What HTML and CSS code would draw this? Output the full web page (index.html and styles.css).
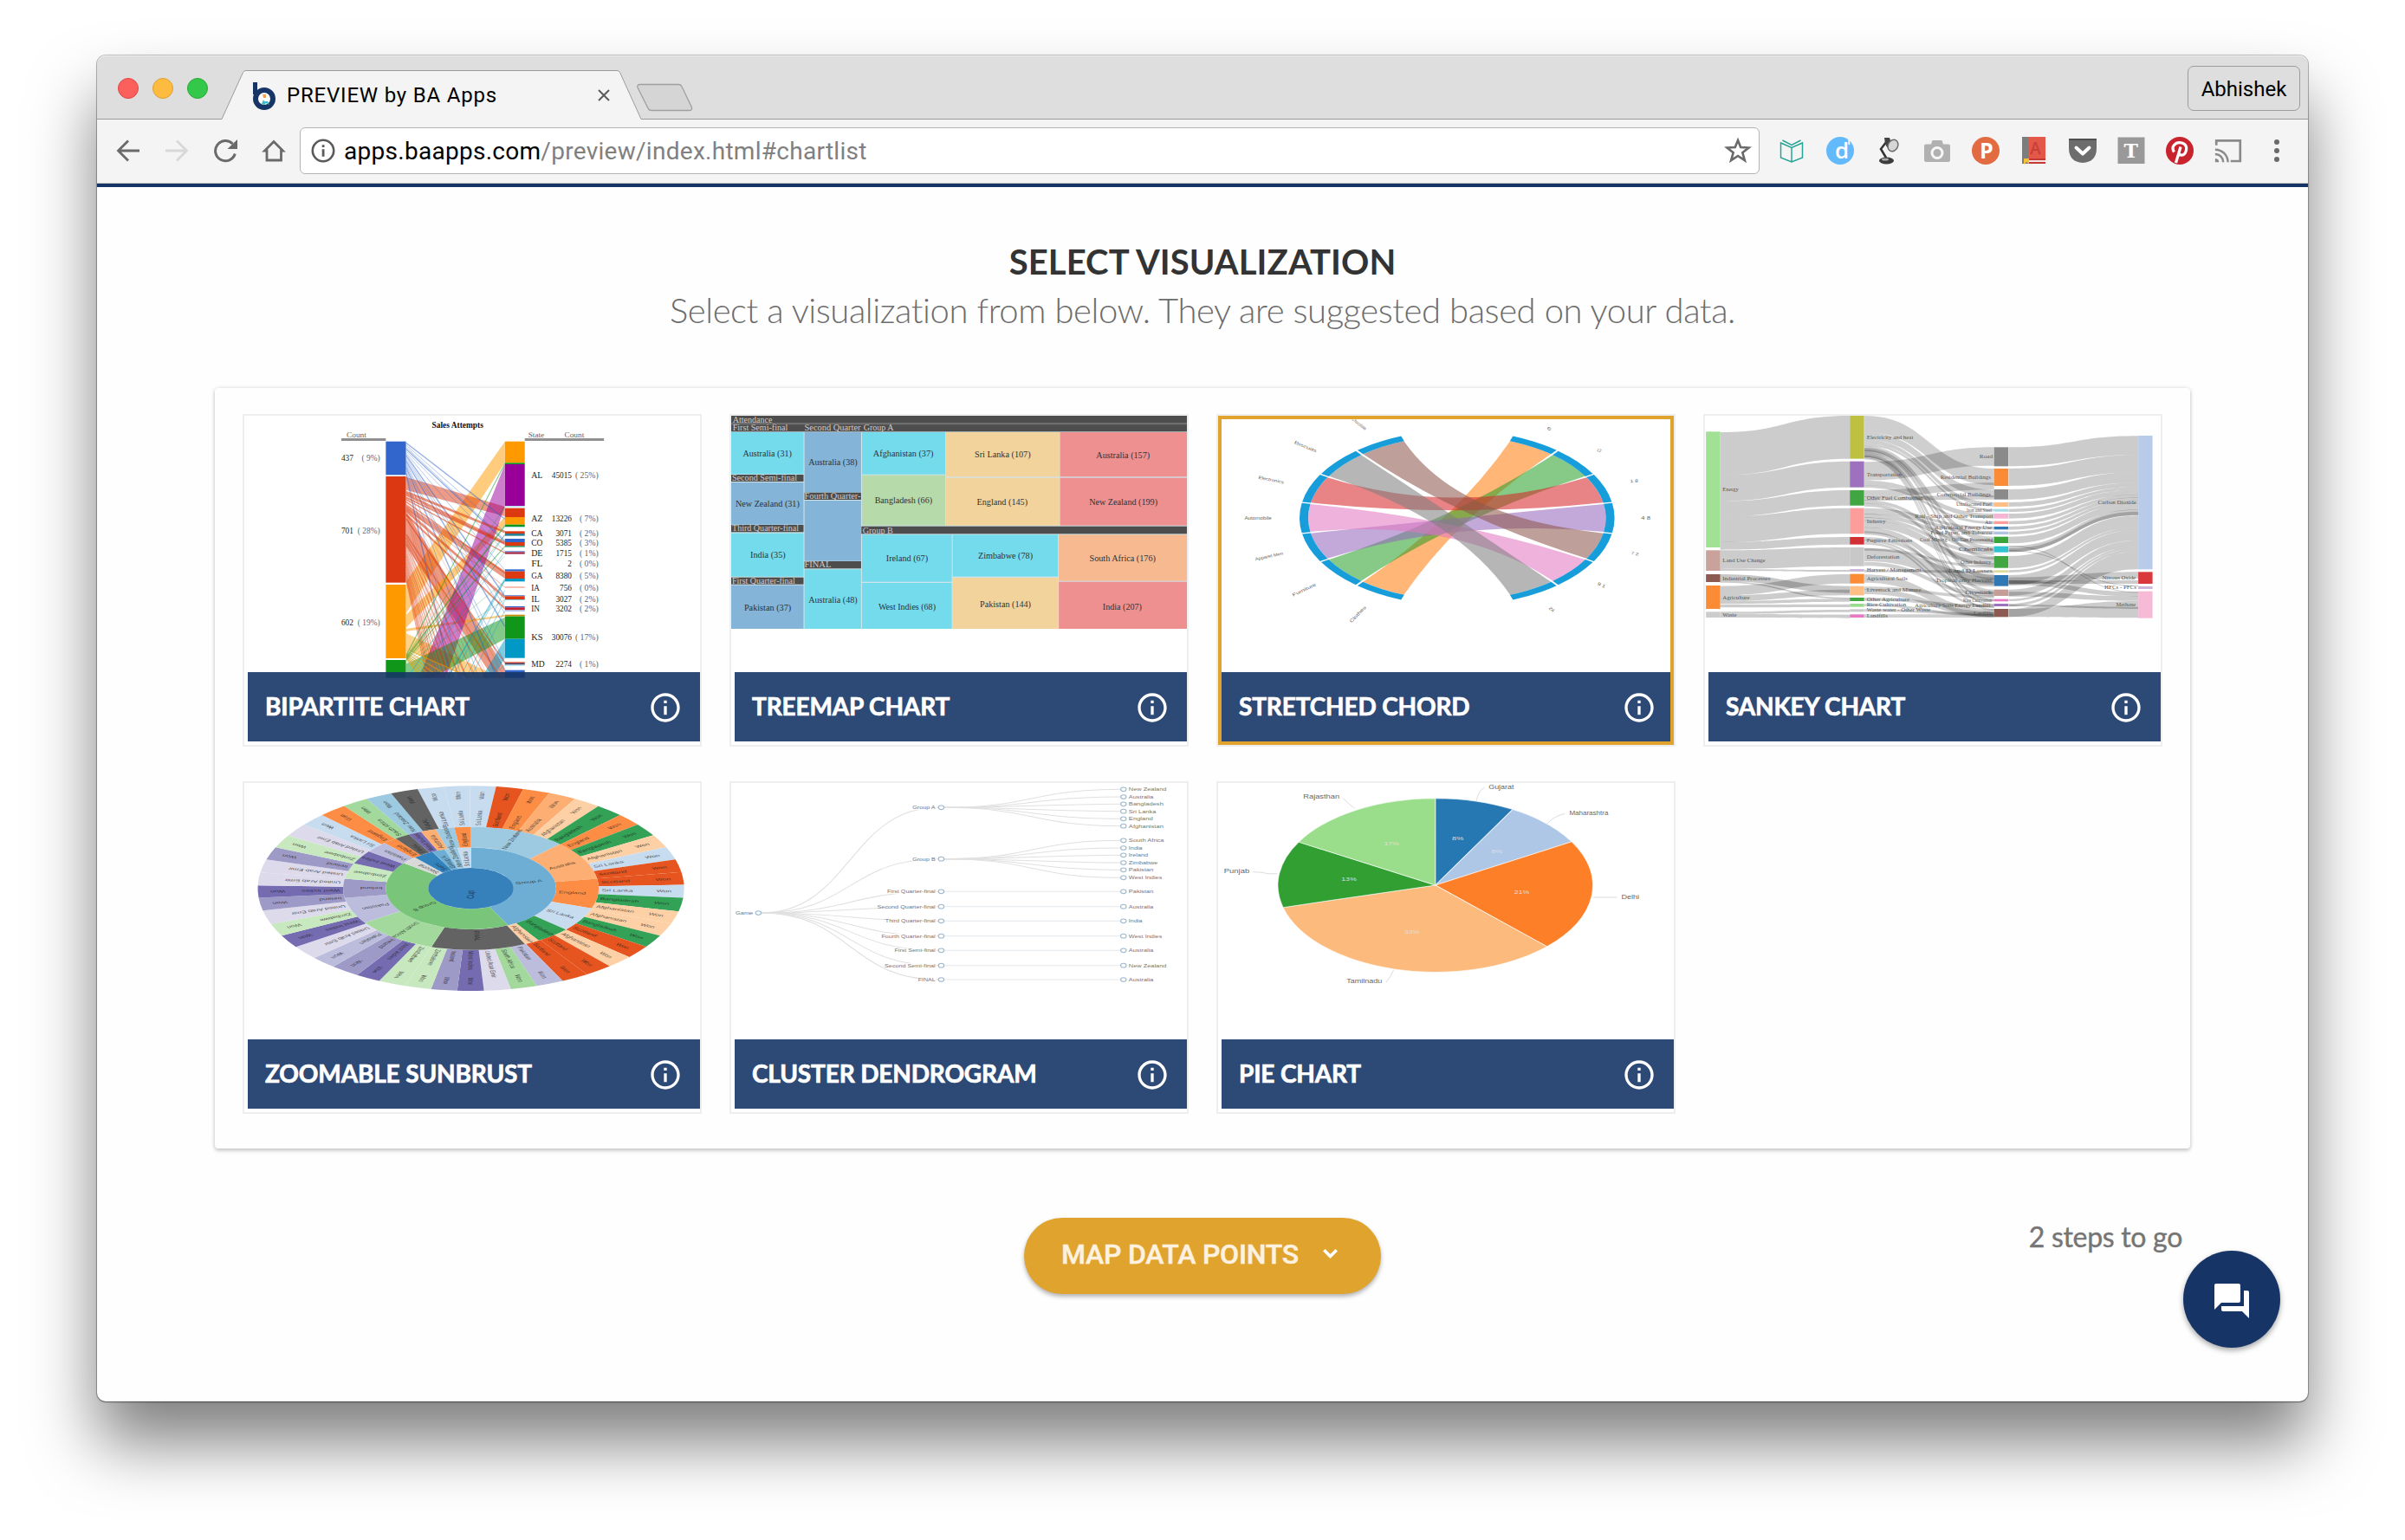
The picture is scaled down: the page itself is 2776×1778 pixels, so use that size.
FILE: index.html
```html
<!DOCTYPE html>
<html lang="en">
<head>
<meta charset="utf-8">
<title>PREVIEW by BA Apps</title>
<link rel="stylesheet" href="styles.css">
</head>
<body>
<div class="window">
  <header class="tabstrip">
    <div class="lights"><i class="light red"></i><i class="light amber"></i><i class="light green"></i></div>
    <div class="tab">
      <svg class="tab-shape" width="492" height="74" viewBox="0 0 492 74"><path d="M0 75 V73.5 H4 L28.500 19.500 Q29.500 17.500 32 17.500 H460 Q462.500 17.500 463.500 19.500 L488 73.500 H492 V75 Z" fill="#f4f4f4"/><path d="M0 73.500 H4 L28.500 19.500 Q29.500 17.500 32 17.500 H460 Q462.500 17.500 463.500 19.500 L488 73.500 H492" fill="none" stroke="#9b9b9b"/></svg>
      <div class="tab-content">
        <svg class="favicon" width="28" height="33" viewBox="0 0 28 33"><path d="M1 0 H6 V14 H1 Z" fill="#163566"/><circle cx="14" cy="19" r="10" fill="#fff" stroke="#163566" stroke-width="6"/><path d="M12 14h4v4h-3z" fill="#f0a050"/><path d="M11 25 l2-5 1 2 4 0 2 4 -4-2 -2 2z" fill="#3cbcc4"/></svg>
        <span class="tab-title">PREVIEW by BA Apps</span>
        <svg class="tab-close" width="14" height="14" viewBox="0 0 14 14"><path d="M1 1 L13 13 M13 1 L1 13" stroke="#5a5a5a" stroke-width="2"/></svg>
      </div>
    </div>
    <svg class="newtab" width="68" height="34" viewBox="0 0 68 34"><path d="M5 1.500 H49 Q52 1.500 53 4 L64.500 28 Q65 31.500 62 31.500 H18 Q15 31.500 14 29 L2 5 Q1 1.500 5 1.500Z" fill="#d5d5d5" stroke="#a0a0a0" stroke-width="1.300"/></svg>
    <div class="profile"><span class="profile-name">Abhishek</span></div>
  </header>

  <nav class="toolbar">
    <div class="nav-icons">
      <svg width="32" height="32" viewBox="0 0 32 32"><path d="M29 16 H5 M16 4.500 L4.500 16 L16 27.500" fill="none" stroke="#6a6a6a" stroke-width="2.800"/></svg>
      <svg width="32" height="32" viewBox="0 0 32 32"><path d="M3 16 H27 M16 4.500 L27.500 16 L16 27.500" fill="none" stroke="#d8d8d8" stroke-width="2.800"/></svg>
      <svg width="32" height="32" viewBox="0 0 32 32"><path d="M27.300 19.500 A11.600 11.600 0 1 1 24.500 8" fill="none" stroke="#6a6a6a" stroke-width="3"/><path d="M30 3 V14 H18.500 Z" fill="#6a6a6a"/></svg>
      <svg width="32" height="32" viewBox="0 0 32 32"><path d="M16 5.500 L26.500 16 H24.500 V27 H8 V16 H5.500 Z" fill="none" stroke="#6a6a6a" stroke-width="2.800"/></svg>
    </div>
    <div class="omnibox">
      <svg width="28" height="28" viewBox="0 0 28 28"><circle cx="14" cy="14" r="12.200" fill="none" stroke="#5a5a5a" stroke-width="2.600"/><path d="M12.700 12.300h2.800v8.500h-2.800zM12.700 7.300h2.800v2.800h-2.800z" fill="#5a5a5a"/></svg>
      <span class="url"><b class="host">apps.baapps.com</b><span class="path">/preview/index.html#chartlist</span></span>
      <svg width="32" height="32" viewBox="0 0 32 32"><path d="M16 4 L19.200 12 L28.500 12.500 L21.300 18.200 L23.900 27.200 L16 22 L8.100 27.200 L10.700 18.200 L3.500 12.500 L12.800 12 Z" fill="none" stroke="#6a6a6a" stroke-width="2.600"/></svg>
    </div>
    <div class="extensions">
      <svg width="32" height="32" viewBox="0 0 32 32"><path d="M3.500 7 L16 12.500 L28.500 7 V24 L16 29 L3.500 24 Z M16 12.500 V29 M5.500 4 L16 9.500 L26.500 4" fill="none" stroke="#26a596" stroke-width="1.500"/></svg>
      <svg width="32" height="32" viewBox="0 0 32 32"><circle cx="16" cy="16" r="16" fill="#62b9fb"/><path d="M25.300 1 h2 v8 h-2z" fill="#f4f4f4"/><text class="ico ico-d" x="10" y="25">d</text></svg>
      <svg width="32" height="32" viewBox="0 0 32 32"><ellipse cx="13.500" cy="27.500" rx="8.500" ry="4" fill="#3c3c3c"/><ellipse cx="12" cy="26" rx="4" ry="1.500" fill="#aaa"/><path d="M13 24 L7 14 L14 5" fill="none" stroke="#333" stroke-width="2.500"/><path d="M11 1 L17 1 L22 15 Q15 16 12 8 Z" fill="#444"/><ellipse cx="21" cy="10" rx="5.600" ry="7" transform="rotate(28 21 10)" fill="#d6d6d6" stroke="#6c6c6c" stroke-width="1.500"/></svg>
      <svg width="32" height="32" viewBox="0 0 32 32"><path d="M3 8.500h6l1.500-4.500h11l1.500 4.500h6q2 0 2 2v16.500q0 2-2 2H3q-2 0-2-2V10.500q0-2 2-2z" fill="#b1b1b1"/><circle cx="16" cy="18.500" r="6" fill="#b1b1b1" stroke="#f7f7f7" stroke-width="3"/></svg>
      <svg width="32" height="32" viewBox="0 0 32 32"><circle cx="16" cy="16" r="16" fill="#e26b42"/><text class="ico ico-p" x="9" y="24.500">P</text></svg>
      <svg width="32" height="32" viewBox="0 0 32 32"><path d="M2 0h7v31h-7z" fill="#7d7d7d"/><path d="M9 0h20v25h-20z" fill="#e4584a"/><text class="ico ico-a" x="11" y="20">A</text><path d="M9 25h20v2h-20zM9 29h20v2h-20z" fill="#c33a35"/><path d="M9 27h20v2h-20z" fill="#f6e4e0"/><path d="M4 25h6v6l-3-2-3 3z" fill="#f5c237"/></svg>
      <svg width="32" height="32" viewBox="0 0 32 32"><path d="M0 2h32v11q0 16-16 17Q0 29 0 13z" fill="#6d6d6d"/><path d="M0 2h32v2H0z" fill="#505050"/><path d="M8.500 12.500L16 19.500l7.500-7" fill="none" stroke="#fff" stroke-width="4" stroke-linecap="round" stroke-linejoin="round"/></svg>
      <svg width="32" height="32" viewBox="0 0 32 32"><path d="M.5.500h31v30.500h-31z" fill="#999"/><text class="ico ico-t" x="7.500" y="24">T</text></svg>
      <svg width="32" height="32" viewBox="0 0 32 32"><circle cx="16" cy="16" r="16" fill="#c9232d"/><path d="M9.500 17.500Q6.500 13 9.500 9.500Q13 5.500 18.500 7Q25 9 23.500 15.500Q22 21.500 17.500 21Q15 20.500 14.500 18.500M17 11.500Q14 22 11.500 30" fill="none" stroke="#fff" stroke-width="3.300"/></svg>
      <svg width="36" height="32" viewBox="0 0 36 32"><path d="M2.500 9V3H33.500V29.500H21" fill="none" stroke="#8a8a8a" stroke-width="3"/><path d="M1 26a5 5 0 0 1 5 5H1z" fill="#8a8a8a"/><path d="M1 20.500A10.500 10.500 0 0 1 11.500 31M1 14.500A16.500 16.500 0 0 1 17.500 31" fill="none" stroke="#8a8a8a" stroke-width="2.800"/></svg>
      <svg width="32" height="32" viewBox="0 0 32 32" fill="#6a6a6a"><circle cx="16" cy="6" r="3"/><circle cx="16" cy="16" r="3"/><circle cx="16" cy="26" r="3"/></svg>
    </div>
  </nav>

  <main class="page">
    <h1 class="title">SELECT VISUALIZATION</h1>
    <p class="subtitle">Select a visualization from below. They are suggested based on your data.</p>

    <section class="panel">
      <article class="card"><svg class="chart" id="bipartite" viewBox="33.6 30 1472.8 1140" preserveAspectRatio="none"></svg><footer class="bar"><span class="name">BIPARTITE CHART</span><svg class="info" viewBox="0 0 24 24"><path d="M11 17h2v-6h-2v6zm1-15C6.480 2 2 6.480 2 12s4.480 10 10 10 10-4.480 10-10S17.520 2 12 2zm0 18c-4.410 0-8-3.590-8-8s3.590-8 8-8 8 3.590 8 8-3.590 8-8 8zM11 9h2V7h-2v2z"/></svg></footer></article>
      <article class="card"><svg class="chart" id="treemap" viewBox="39.2 30 1472.8 1140" preserveAspectRatio="none"></svg><footer class="bar"><span class="name">TREEMAP CHART</span><svg class="info" viewBox="0 0 24 24"><path d="M11 17h2v-6h-2v6zm1-15C6.480 2 2 6.480 2 12s4.480 10 10 10 10-4.480 10-10S17.520 2 12 2zm0 18c-4.410 0-8-3.590-8-8s3.590-8 8-8 8 3.590 8 8-3.590 8-8 8zM11 9h2V7h-2v2z"/></svg></footer></article>
      <article class="card selected"><svg class="chart" id="chord" viewBox="44.8 30 1472.8 1140" preserveAspectRatio="none"></svg><footer class="bar"><span class="name">STRETCHED CHORD</span><svg class="info" viewBox="0 0 24 24"><path d="M11 17h2v-6h-2v6zm1-15C6.480 2 2 6.480 2 12s4.480 10 10 10 10-4.480 10-10S17.520 2 12 2zm0 18c-4.410 0-8-3.590-8-8s3.590-8 8-8 8 3.590 8 8-3.590 8-8 8zM11 9h2V7h-2v2z"/></svg></footer></article>
      <article class="card"><svg class="chart" id="sankey" viewBox="47 30 1374.6 1140" preserveAspectRatio="none"></svg><footer class="bar"><span class="name">SANKEY CHART</span><svg class="info" viewBox="0 0 24 24"><path d="M11 17h2v-6h-2v6zm1-15C6.480 2 2 6.480 2 12s4.480 10 10 10 10-4.480 10-10S17.520 2 12 2zm0 18c-4.410 0-8-3.590-8-8s3.590-8 8-8 8 3.590 8 8-3.590 8-8 8zM11 9h2V7h-2v2z"/></svg></footer></article>
      <article class="card"><svg class="chart" id="sunburst" viewBox="33.6 42 1472.8 1140" preserveAspectRatio="none"></svg><footer class="bar"><span class="name">ZOOMABLE SUNBRUST</span><svg class="info" viewBox="0 0 24 24"><path d="M11 17h2v-6h-2v6zm1-15C6.480 2 2 6.480 2 12s4.480 10 10 10 10-4.480 10-10S17.520 2 12 2zm0 18c-4.410 0-8-3.590-8-8s3.590-8 8-8 8 3.590 8 8-3.590 8-8 8zM11 9h2V7h-2v2z"/></svg></footer></article>
      <article class="card"><svg class="chart" id="dendrogram" viewBox="39.2 42 1472.8 1140" preserveAspectRatio="none"></svg><footer class="bar"><span class="name">CLUSTER DENDROGRAM</span><svg class="info" viewBox="0 0 24 24"><path d="M11 17h2v-6h-2v6zm1-15C6.480 2 2 6.480 2 12s4.480 10 10 10 10-4.480 10-10S17.520 2 12 2zm0 18c-4.410 0-8-3.590-8-8s3.590-8 8-8 8 3.590 8 8-3.590 8-8 8zM11 9h2V7h-2v2z"/></svg></footer></article>
      <article class="card"><svg class="chart" id="pie" viewBox="44.8 42 1472.8 1140" preserveAspectRatio="none"></svg><footer class="bar"><span class="name">PIE CHART</span><svg class="info" viewBox="0 0 24 24"><path d="M11 17h2v-6h-2v6zm1-15C6.480 2 2 6.480 2 12s4.480 10 10 10 10-4.480 10-10S17.520 2 12 2zm0 18c-4.410 0-8-3.590-8-8s3.590-8 8-8 8 3.590 8 8-3.590 8-8 8zM11 9h2V7h-2v2z"/></svg></footer></article>
    </section>

    <div class="actions">
      <button class="map-button"><span class="map-label">MAP DATA POINTS</span><svg class="chevron" width="17" height="11" viewBox="0 0 17 11"><path d="M1.300 1.300l7.200 7.200 7.200-7.200" fill="none" stroke="#fff" stroke-width="3.600"/></svg></button>
      <span class="steps">2 steps to go</span>
    </div>
  </main>
  <div class="chat"><svg width="48" height="48" viewBox="0 0 24 24"><path d="M21 6h-2v9H6v2c0 .55.450 1 1 1h11l4 4V7c0-.55-.45-1-1-1zm-4 6V3c0-.55-.45-1-1-1H3c-.55 0-1 .45-1 1v14l4-4h10c.55 0 1-.45 1-1z" fill="#fff"/></svg></div>
</div>
<script src="charts.js"></script>
</body>
</html>
```
FILE: styles.css
```css
* { box-sizing: border-box; }
html { background: #fff; }
body { margin: 0; padding: 64px 112px 160px; height: 1778px; overflow: hidden; font-family: Lato, "Open Sans", sans-serif; }
svg { display: block; flex: none; }

.window {
  position: relative;
  display: flex;
  flex-direction: column;
  width: 2552px;
  height: 1554px;
  border-radius: 10px;
  background: #fefefe;
  box-shadow: 0 0 0 1px rgba(0, 0, 0, .22), 0 1px 2px rgba(0, 0, 0, .35), 0 48px 76px rgba(0, 0, 0, .5);
}

.tabstrip {
  display: flex;
  align-items: center;
  height: 74px;
  background: #dedede;
  border-radius: 10px 10px 0 0;
  box-shadow: inset 0 -1px 0 #9b9b9b, inset 0 1px 0 #ececec;
}
.lights { display: flex; gap: 16px; padding: 2px 0 0 24px; }
.light { width: 24px; height: 24px; border-radius: 50%; border: 1px solid; }
.light.red { background: #fc605c; border-color: #e0443e; }
.light.amber { background: #fdbc40; border-color: #de9f34; }
.light.green { background: #34c84a; border-color: #26a934; }
.tab { display: grid; margin-left: 12px; width: 492px; height: 74px; }
.tab-shape, .tab-content { grid-area: 1 / 1; }
.tab-content { display: flex; align-items: center; padding: 18px 40px 0 39px; }
.favicon { margin-top: 2px; }
.tab-title { margin-left: 12px; font: 24px Roboto, sans-serif; letter-spacing: .8px; color: #000; white-space: nowrap; }
.tab-close { margin-left: auto; }
.newtab { margin: 23px 0 0 -10px; }
.profile {
  display: flex;
  align-items: center;
  justify-content: center;
  width: 130px;
  height: 52px;
  margin: 2px 9px 0 auto;
  padding-top: 2px;
  border: 1px solid #9c9c9c;
  border-radius: 7px;
  font: 24px Roboto, sans-serif;
  color: #000;
}

.toolbar {
  display: flex;
  align-items: center;
  height: 78px;
  padding: 0 20px;
  background: #f4f4f4;
  border-bottom: 4px solid #163566;
  box-shadow: inset 0 -1px 0 #c2c2c2;
}
.nav-icons, .extensions { display: flex; align-items: center; gap: 24px; margin-top: -2px; }
.extensions svg { width: 32px; overflow: visible; }
.omnibox {
  flex: 1;
  display: flex;
  align-items: center;
  height: 54px;
  margin: -2px 21px 0 14px;
  padding: 0 8px 0 12px;
  background: #fff;
  border: 1px solid #b4b4b4;
  border-radius: 6px;
}
.url { flex: 1; margin-left: 10px; font: 28px Roboto, sans-serif; letter-spacing: .28px; color: #808080; white-space: nowrap; }
.host { font-weight: 400; color: #000; }
.ico { fill: #fff; font-family: "Open Sans", sans-serif; font-weight: 700; }
.ico-d { font-size: 26px; font-weight: 600; }
.ico-p { font-size: 25px; }
.ico-a { font-size: 19px; fill: #c94038; font-weight: 600; }
.ico-t { font-family: "DejaVu Serif", serif; font-size: 22px; }

.page { padding: 58px 136px 0; }
.title, .subtitle { margin: 0; text-align: center; font-size: 40px; line-height: 56px; }
.title { font-weight: 700; letter-spacing: .1px; color: #333; }
.subtitle { font-weight: 300; letter-spacing: -.42px; color: #6c6c6c; }

.panel {
  display: grid;
  grid-template-columns: repeat(4, 530px);
  gap: 40px 32px;
  margin-top: 62px;
  padding: 30px 32px 40px;
  background: #fefefe;
  border-radius: 4px;
  box-shadow: 0 3px 4px rgba(0, 0, 0, .16), 0 0 5px rgba(0, 0, 0, .14);
}
.card { position: relative; height: 384px; border: 2px solid #eee; background: #fff; }
.chart { width: 526px; height: 380px; }
.bar {
  position: absolute;
  left: 4px;
  right: 0;
  bottom: 4px;
  height: 80px;
  display: flex;
  align-items: center;
  justify-content: space-between;
  padding: 0 20px;
  background: rgba(22, 53, 102, .9);
}
.selected::after { content: ""; position: absolute; inset: 0; border: 4px solid #e0a42e; }
.selected .bar { right: 4px; padding-right: 16px; }
.name { margin-top: -2px; font-size: 28px; font-weight: 700; letter-spacing: -.15px; color: #fff; -webkit-text-stroke: .7px #fff; white-space: nowrap; }
.info { width: 40px; height: 40px; margin-top: 2px; fill: #fff; }

.actions { display: grid; grid-template-columns: 1fr auto 1fr; margin-top: 80px; }
.map-button {
  grid-column: 2;
  display: flex;
  align-items: center;
  justify-content: space-between;
  width: 412px;
  height: 88px;
  padding: 0 50px 0 43px;
  border: 0;
  border-radius: 44px;
  background: #e0a42e;
  color: #fdf1e0;
  font: 500 32px Roboto, sans-serif;
  box-shadow: 0 3px 5px rgba(0, 0, 0, .3);
}
.map-label { margin-top: -4px; letter-spacing: -.22px; -webkit-text-stroke: .5px #fdf1e0; }
.chevron { margin-top: -6px; }
.steps { justify-self: end; height: 40px; margin: 2px 9px 0 0; font-size: 32px; line-height: 40px; letter-spacing: -.3px; color: #757575; -webkit-text-stroke: .4px #757575; }
.chat {
  position: absolute;
  right: 32px;
  bottom: 62px;
  width: 112px;
  height: 112px;
  display: grid;
  place-items: center;
  padding-top: 4px;
  border-radius: 50%;
  background: #163566;
  box-shadow: 0 3px 6px rgba(0, 0, 0, .35);
}

.serif { font-family: "Liberation Serif", serif; }
.sans { font-family: "Liberation Sans", sans-serif; }
```
FILE: charts.js
```js
(function () {
  var NS = 'http://www.w3.org/2000/svg';
  function add(parent, tag, attrs, text) {
    var e = document.createElementNS(NS, tag);
    for (var k in attrs) e.setAttribute(k, attrs[k]);
    if (text !== undefined) e.textContent = text;
    parent.appendChild(e);
    return e;
  }
  function rect(p, x, y, w, h, fill, o) { return add(p, 'rect', { x: x, y: y, width: w, height: h, fill: fill, opacity: o || 1 }); }
  function poly(p, pts, fill, o) { add(p, 'polygon', { points: pts, fill: fill, opacity: o }); }
  function line(p, x1, y1, x2, y2, c, w, o) { add(p, 'line', { x1: x1, y1: y1, x2: x2, y2: y2, stroke: c, 'stroke-width': w, opacity: o || 1 }); }
  // Label fitted between x1 and x2 on a baseline
  function label(p, t, x1, x2, y, size, fill, cls, extra) {
    var a = { x: x1, y: y, 'font-size': size, fill: fill, 'class': cls || 'serif', textLength: x2 - x1, lengthAdjust: 'spacingAndGlyphs' };
    for (var k in extra || {}) a[k] = extra[k];
    add(p, 'text', a, t);
  }

  // ---- Bipartite ----
  (function () {
    var s = document.getElementById('bipartite');
    var B = '#3366cc', R = '#dc3912', O = '#ff9900', G = '#109618', P = '#990099', C = '#0099c6', i;
    var clip = add(s, 'clipPath', { id: 'bp' });
    rect(clip, 556, 100, 320, 838, '#000');
    var g = add(s, 'g', { 'clip-path': 'url(#bp)' });
    poly(g, '556,605 876,119 876,192 556,715', O, .5);
    poly(g, '556,242 876,345 876,378 556,287', R, .5);
    poly(g, '556,336 876,568 876,594 556,356', R, .5);
    poly(g, '556,362 876,905 876,1000 556,480', R, .5);
    poly(g, '556,720 876,381 876,407 556,765', O, .5);
    poly(g, '556,768 876,719 876,725 556,777', O, .5);
    poly(g, '556,783 876,945 876,1000 556,836', O, .45);
    poly(g, '876,198 876,342 684,938 598,938', P, .5);
    poly(g, '556,890 876,728 876,803 556,985', G, .5);
    poly(g, '876,803 876,869 838,938 800,938', C, .5);
    var bt = [388, 432, 460, 466, 500, 565, 655, 692, 715, 760, 885, 915, 1000, 1200, 1500, 1800];
    bt.forEach(function (y, i) { line(g, 556, 124 + i * 7, 876, y, B, i % 3 ? 2 : 4, .5); });
    [[294, 433, 8], [302, 470, 9], [313, 474, 6], [320, 505, 4], [328, 575, 4], [347, 624, 2], [358, 660, 8], [372, 698, 6], [386, 886, 4]].forEach(function (a) { line(g, 556, a[0], 876, a[1], R, a[2], .55); });
    for (i = 0; i < 15; i++) line(g, 556, 440 + i * 11, 876, 960 + i * 90, R, 5 - i % 3, .42);
    for (i = 0; i < 7; i++) line(g, 556, 290 + i * 12, 876, 940 + i * 130, R, 2, .3);
    for (i = 0; i < 7; i++) line(g, 556, 838 + i * 5, 876, 990 + i * 60, O, 4, .55);
    [[195, 3], [345, 2], [410, 5], [442, 2], [482, 3], [515, 1.500], [603, 1.500], [666, 1.500]].forEach(function (a, i) { line(g, 556, 862 + i * 4, 876, a[0], G, a[1], .5); });
    [[442, 560], [500, 590], [596, 690], [600, 705], [634, 730], [668, 750], [705, 765], [893, 830]].forEach(function (a, i) { line(g, a[1], 938, 876, a[0], C, i === 2 ? 5 : 2.500, .45); });
    rect(s, 491, 119, 65, 116, B); rect(s, 491, 240, 65, 368, R); rect(s, 491, 615, 65, 255, O); rect(s, 491, 876, 65, 62, G);
    [[119, 74, O], [193, 5, G], [198, 144, P], [343, 3, '#9fd0ea'], [350, 31, R], [381, 26, O], [407, 7, G], [414, 3, '#a8dcea'], [430, 8, R], [438, 8, '#2a7f95'], [456, 12, B], [468, 12, R], [480, 5, '#3f9b70'], [498, 4, '#7f9fe0'], [502, 7, '#a32a4a'], [562, 7, B], [569, 25, R], [594, 10, C], [622, 4, '#f0a08c'], [652, 3, B], [655, 11, R], [666, 3, '#7fccdf'], [690, 4, B], [694, 9, '#c02030'], [704, 3, '#8fb0f0'], [719, 6, '#c98f10'], [725, 78, G], [803, 66, C], [883, 4, R], [887, 5, '#3a3a60'], [893, 3, '#8fd8ea'], [911, 27, B]].forEach(function (a) { rect(s, 876, a[0], 64, a[1], a[2]); });
    rect(s, 347, 108, 144, 9, '#909090'); rect(s, 940, 108, 256, 9, '#909090');
    label(s, 'Sales Attempts', 640, 806, 73, 32, '#111', 'serif', { 'font-weight': 700 });
    label(s, 'Count', 364, 428, 104, 27, '#666'); label(s, 'State', 951, 1003, 104, 27, '#666'); label(s, 'Count', 1068, 1132, 104, 27, '#666');
    [['437', '( 9%)', 187], ['701', '( 28%)', 437], ['602', '( 19%)', 756]].forEach(function (a) {
      label(s, a[0], 347, 386, a[2], 29, '#222'); label(s, a[1], a[1].length > 5 ? 400 : 413, 472, a[2], 29, '#666');
    });
    [['AL', '45015', '( 25%)', 246], ['AZ', '13226', '( 7%)', 395], ['CA', '3071', '( 2%)', 448], ['CO', '5385', '( 3%)', 481], ['DE', '1715', '( 1%)', 516], ['FL', '2', '( 0%)', 553], ['GA', '8380', '( 5%)', 594], ['IA', '756', '( 0%)', 637], ['IL', '3027', '( 2%)', 674], ['IN', '3202', '( 2%)', 709], ['KS', '30076', '( 17%)', 806], ['MD', '2274', '( 1%)', 901]].forEach(function (a) {
      label(s, a[0], 961, a[0][0] === 'I' ? 988 : a[0] === 'MD' ? 1004 : 998, a[3], 29, '#222');
      label(s, a[1], 1092 - a[1].length * 13, 1092, a[3], 29, '#222');
      label(s, a[2], a[2].length > 5 ? 1103 : 1117, 1178, a[3], 29, '#666');
    });
  })();

  // ---- Treemap ----
  (function () {
    var s = document.getElementById('treemap');
    var c = '#74dbec', b = '#84b4d7', g = '#b7daab', y = '#f2d39b', r = '#ef9090', o = '#f7b98f', d = '#4d4d4d';
    rect(s, 39, 30, 1473, 738, '#cfe4ea');
    rect(s, 39, 30, 1473, 55, d); rect(s, 39, 54, 1473, 7, '#6e6e6e');
    [[39, 87, 234, 145, c], [39, 234, 234, 24, d], [39, 261, 234, 146, b], [39, 408, 234, 25, d], [39, 437, 234, 150, c], [39, 590, 234, 24, d], [39, 617, 234, 151, b],
     [276, 87, 183, 208, b], [276, 296, 183, 25, d], [276, 324, 183, 209, b], [276, 534, 183, 25, d], [276, 562, 183, 206, c],
     [462, 87, 269, 146, c], [462, 236, 269, 174, g], [733, 87, 367, 154, y], [733, 245, 367, 165, y], [1102, 87, 410, 154, r], [1102, 245, 410, 165, r],
     [460, 413, 1052, 26, d], [462, 442, 290, 163, c], [462, 609, 290, 159, c], [755, 442, 340, 145, c], [755, 591, 340, 177, y], [1098, 442, 414, 160, o], [1098, 605, 414, 163, r]
    ].forEach(function (a) { rect(s, a[0], a[1], a[2], a[3], a[4]); });
    [['Attendance', 44, 172, 53], ['First Semi-final', 44, 222, 81], ['Second Quarter', 276, 458, 81], ['Group A', 467, 564, 81], ['Second Semi-final', 42, 252, 255], ['Third Quarter-final', 42, 258, 430], ['First Quarter-final', 42, 246, 611], ['Fourth Quarter-', 276, 458, 318], ['FINAL', 276, 362, 556], ['Group B', 464, 562, 437]].forEach(function (a) { label(s, a[0], a[1], a[2], a[3], 28, '#cfc9c9'); });
    [['Australia (31)', 77, 235, 171], ['New Zealand (31)', 53, 260, 344], ['India (35)', 101, 215, 522], ['Pakistan (37)', 81, 233, 705], ['Australia (38)', 289, 447, 202], ['Australia (48)', 289, 447, 678], ['Afghanistan (37)', 498, 693, 172], ['Bangladesh (66)', 503, 689, 334], ['Sri Lanka (107)', 826, 1007, 174], ['England (145)', 833, 997, 338], ['Australia (157)', 1219, 1392, 176], ['New Zealand (199)', 1196, 1417, 340], ['Ireland (67)', 540, 675, 534], ['West Indies (68)', 515, 700, 702], ['Zimbabwe (78)', 837, 1014, 526], ['Pakistan (144)', 843, 1008, 694], ['South Africa (176)', 1197, 1411, 533], ['India (207)', 1240, 1366, 701]].forEach(function (a) { label(s, a[0], a[1], a[2], a[3], 29, '#2c3338'); });
  })();

  // ---- Stretched chord ----
  (function () {
    var s = document.getElementById('chord'), cx = 817, cy = 384;
    function pt(deg, rx, ry) { var t = deg * Math.PI / 180; return (cx + rx * Math.cos(t)).toFixed(1) + ' ' + (cy - ry * Math.sin(t)).toFixed(1); }
    var L = [110.4, 129.6, 150, 169.8, 190.2, 210, 230.4, 249.6], i;
    var col = ['#8c564b', '#7f7f7f', '#d62728', '#e377c2', '#9467bd', '#2ca02c', '#ff7f0e'], to = [4, 6, 2, 5, 3, 1, 0];
    for (i = 6; i >= 0; i--) {
      var a0 = L[i] + .5, a1 = L[i + 1] - .5, j = to[i], b0 = 180 - L[j] - .5, b1 = 180 - L[j + 1] + .5;
      add(s, 'path', { d: 'M' + pt(a0, 481, 285) + 'A481 285 0 0 0 ' + pt(a1, 481, 285) + 'Q817 384 ' + pt(b1, 481, 285) + 'A481 285 0 0 0 ' + pt(b0, 481, 285) + 'Q817 384 ' + pt(a0, 481, 285) + 'Z', fill: col[i], opacity: .57 });
    }
    for (i = 0; i < 7; i++) {
      [[L[i] + .4, L[i + 1] - .4], [180 - L[i + 1] + .4, 180 - L[i] - .4]].forEach(function (r) {
        add(s, 'path', { d: 'M' + pt(r[0], 509, 303) + 'A509 303 0 0 0 ' + pt(r[1], 509, 303) + 'L' + pt(r[1], 481, 285) + 'A481 285 0 0 1 ' + pt(r[0], 481, 285) + 'Z', fill: '#189ddb' });
      });
    }
    [['Chocolate', 476, 44, 40, 56], ['Biscuits', 290, 126, 24, 78], ['Electronics', 174, 248, 12, 84], ['Automobile', 130, 390, 0, 88], ['Apparel Men', 166, 532, -13, 92], ['Furniture', 288, 656, -27, 84], ['Clothes', 476, 748, -48, 72],
     ['6', 1106, 74, 40, 14], ['12', 1268, 152, 20, 14], ['1 8', 1377, 262, -5, 26], ['4 8', 1412, 390, 0, 30], ['7 2', 1378, 510, 10, 26], ['9 1', 1270, 616, 24, 26], ['24', 1112, 698, 40, 20]].forEach(function (a) {
      label(s, a[0], a[1], a[1] + a[4], a[2], 15, '#666', 'sans', { transform: 'rotate(' + a[3] + ' ' + a[1] + ' ' + a[2] + ')' });
    });
  })();

  // ---- Sankey ----
  (function () {
    var s = document.getElementById('sankey');
    function link(x0, y0, x1, y1, h, o, h1) {
      var m = (x0 + x1) / 2; h1 = h1 || h;
      add(s, 'path', { d: 'M' + x0 + ' ' + y0 + 'C' + m + ' ' + y0 + ' ' + m + ' ' + y1 + ' ' + x1 + ' ' + y1 + 'V' + (y1 + h1) + 'C' + m + ' ' + (y1 + h1) + ' ' + m + ' ' + (y0 + h) + ' ' + x0 + ' ' + (y0 + h) + 'Z', fill: '#000', 'fill-opacity': o || .2 });
    }
    var n = [[50, 85, 401, '#a1e195'], [50, 496, 71, '#c8a29b'], [50, 579, 27, '#8c5a50'], [50, 618, 81, '#fb8b34'], [50, 709, 20, '#ccc'],
      [484, 30, 149, '#bec042'], [484, 188, 90, '#9d71be'], [484, 288, 53, '#41a541'], [484, 350, 89, '#fc9d9c'], [484, 450, 26, '#d13034'], [484, 486, 65, '#c8c8c8'], [484, 561, 9, '#c9b6d8'], [484, 578, 33, '#fb8b34'], [484, 620, 32, '#fdbf86'], [484, 660, 12, '#41a541'], [484, 681, 11, '#9bdb8e'], [484, 700, 9, '#c8c8c8'], [484, 718, 11, '#e678c4'],
      [919, 139, 66, '#8a8a8a'], [919, 213, 60, '#fb8b34'], [919, 285, 35, '#8a8a8a'], [919, 330, 15, '#fdbf86'], [919, 353, 9, '#a0dbe6'], [919, 369, 17, '#f6b5d5'], [919, 395, 10, '#fc9d9c'], [919, 414, 10, '#3078b4'], [919, 431, 10, '#b0c4e0'], [919, 449, 22, '#3aa33a'], [919, 482, 21, '#2fc3d2'], [919, 516, 41, '#41a541'], [919, 565, 8, '#dcdc98'], [919, 582, 38, '#3078b4'], [919, 632, 22, '#c39d96'], [919, 665, 8, '#e678c4'], [919, 681, 9, '#9d71be'], [919, 699, 28, '#8c5a50'],
      [1354, 99, 463, '#b8cce9'], [1354, 571, 41, '#d9393c'], [1354, 621, 9, '#c9b6d8'], [1354, 638, 93, '#f6b9d6']];
    link(93, 87, 484, 30, 149); link(93, 236, 484, 188, 90); link(93, 326, 484, 288, 53); link(93, 379, 484, 350, 89); link(93, 468, 484, 450, 26, .2, 26);
    link(93, 496, 484, 486, 65); link(93, 561, 484, 564, 6);
    link(93, 579, 484, 620, 24, .22); link(93, 603, 484, 660, 5);
    link(93, 620, 484, 579, 32); link(93, 652, 484, 632, 20); link(93, 672, 484, 664, 10); link(93, 684, 484, 683, 10); link(93, 709, 484, 702, 8); link(93, 717, 484, 719, 12);
    var e = [[30, 213, 57], [87, 287, 26], [113, 330, 14], [127, 353, 8], [134, 449, 18], [141, 483, 14], [148, 516, 12], [155, 582, 18], [160, 632, 12], [167, 665, 6], [171, 681, 6], [175, 699, 6],
      [190, 139, 64], [254, 369, 17], [270, 396, 9], [288, 262, 24], [310, 306, 14], [322, 490, 12], [332, 541, 12], [350, 414, 10], [360, 429, 12], [370, 461, 14], [382, 500, 12], [392, 520, 26], [416, 590, 20], [430, 638, 12],
      [450, 604, 12], [460, 666, 7], [468, 688, 8], [488, 548, 9], [490, 578, 44], [536, 642, 14], [563, 566, 9], [580, 700, 28], [622, 652, 10], [630, 708, 18], [661, 684, 10], [682, 718, 8], [700, 712, 9], [718, 718, 11]];
    e.forEach(function (a) { link(528, a[0], 919, a[1], a[2], .19); });
    [[139, 100, 66], [213, 166, 60], [285, 226, 36], [330, 262, 15], [353, 277, 10], [369, 287, 17], [395, 303, 11], [414, 313, 11], [431, 323, 11], [449, 333, 23], [482, 355, 20], [490, 362, 12], [516, 376, 42], [565, 418, 8], [582, 426, 36], [632, 462, 22], [665, 484, 7], [681, 491, 9], [480, 640, 3], [496, 618, 3], [590, 571, 22], [600, 640, 16], [640, 655, 16], [684, 692, 7], [600, 600, 12]].forEach(function (a) { link(963, a[0], 1354, a[1], a[2], .2); });
    link(963, 699, 1354, 500, 28, .2, 62); link(963, 699, 1354, 672, 28, .2, 58);
    n.forEach(function (a) { rect(s, a[0], a[1], 43, a[2], a[3]); });
    [['Energy', 100, 148, 291], ['Land Use Change', 100, 229, 537], ['Industrial Processes', 100, 244, 599], ['Agriculture', 100, 182, 665], ['Waste', 100, 142, 725],
     ['Electricity and heat', 535, 675, 111], ['Transportation', 535, 640, 240], ['Other Fuel Combustion', 535, 705, 320], ['Industry', 535, 592, 402], ['Fugitive Emissions', 535, 672, 468], ['Deforestation', 535, 634, 524], ['Harvest / Management', 535, 699, 571], ['Agricultural Soils', 535, 658, 600], ['Livestock and Manure', 535, 699, 640], ['Other Agriculture', 535, 664, 671], ['Rice Cultivation', 535, 654, 691], ['Waste water - Other Waste', 535, 727, 708], ['Landfills', 535, 598, 729],
     ['Road', 875, 915, 177], ['Residential Buildings', 757, 909, 249], ['Commercial Buildings', 746, 909, 308], ['Unallocated Fuel', 805, 912, 343], ['Iron and Steel', 836, 912, 362], ['Rail - Ship and Other Transport', 680, 916, 383], ['Air', 891, 913, 405], ['Agricultural Energy Use', 740, 912, 423], ['Food Paper, and Tobacco', 728, 912, 441], ['Coal Mining - Oil/Gas Processing', 695, 916, 464], ['Chemicals', 812, 914, 498], ['Other Industry', 818, 910, 543], ['T and D Losses', 778, 914, 574], ['Tropical only Harvest', 743, 912, 607], ['Livestock', 832, 912, 649], ['Rice Cultivation', 826, 912, 674], ['Agriculture Soils Energy Landfill', 680, 908, 692], ['Landfills', 858, 913, 720],
     ['Carbon Dioxide', 1232, 1348, 336], ['Nitrous Oxide', 1245, 1346, 598], ['HFCs - PFCs', 1252, 1348, 631], ['Methane', 1287, 1346, 689]].forEach(function (a) { label(s, a[0], a[1], a[2], a[3], 17, '#555', 'serif'); });
  })();

  // ---- Sunburst ----
  (function () {
    var s = document.getElementById('sunburst');
    var g = add(s, 'g', { transform: 'translate(766 407) scale(1 .5155)' });
    var C = { r: '#e6551f', o: '#fd8d45', p: '#fdae72', q: '#fdd0a6', g: '#33a156', l: '#c8dcf0', b: '#9ecae1', m: '#6eaed4', k: '#636363', u: '#756bb1', v: '#9e9ac8', w: '#bcbddc', x: '#dcdaeb', a: '#a3d99c', c: '#c8e9c0', h: '#3182bd', n: '#79c57a', y: '#d9d9d9' };
    var N = { r: 'Scotland', o: 'England', p: 'Australia', q: 'Afghanistan', g: 'Bangladesh', l: 'Sri Lanka', b: 'New Zealand', m: 'Group A', k: 'FINAL', u: 'West Indies', v: 'Ireland', w: 'Pakistan', x: 'United Arab Emir', a: 'South Africa', c: 'Zimbabwe', h: 'Semi', n: 'Group B', y: 'Second' };
    function P(a, r) { var t = (a - 90) * Math.PI / 180; return (r * Math.cos(t)).toFixed(1) + ' ' + (r * Math.sin(t)).toFixed(1); }
    function seg(r0, r1, a0, a1, k) {
      var big = a1 - a0 > 180 ? 1 : 0;
      add(g, 'path', { d: 'M' + P(a0, r0) + 'L' + P(a0, r1) + 'A' + r1 + ' ' + r1 + ' 0 ' + big + ' 1 ' + P(a1, r1) + 'L' + P(a1, r0) + 'A' + r0 + ' ' + r0 + ' 0 ' + big + ' 0 ' + P(a0, r0) + 'Z', fill: C[k] });
      add(g, 'text', { x: r0 + 10, y: 8, 'font-size': 24, fill: '#222', opacity: .72, 'class': 'sans', transform: 'rotate(' + ((a0 + a1) / 2 - 90).toFixed(1) + ')' }, N[k]);
    }
    function ring(r0, r1, start, str, outer) {
      var a = start;
      str.split(' ').forEach(function (e) {
        var k = e[0], b = +e.slice(1);
        seg(r0, r1, a, b, k);
        if (outer && k !== 'x') {
          add(g, 'text', { x: 600, y: 8, 'font-size': 24, fill: '#222', opacity: .72, 'class': 'sans', transform: 'rotate(' + ((a + b) / 2 - 90).toFixed(1) + ')' }, 'Won');
        }
        a = b;
      });
    }
    ring(413, 689, -14.5, 'l-7.3 l-.3 l6.8 r14.2 o21.6 p29.2 q36.7 g44.4 o51.5 g58.8 q66.3 l73.6 r80.8 r88 l95.3 g103 q110 q117.5 g124.7 r132 q139.4 r147 r154.5 w162 a169.2 x176.5 u183.7 v190.8 c198 c205.5 u212.3 v220.2 w227.3 x235.2 u242.6 c249.7 x257.5 v264.7 u271.6 x279 x286.4 v293.6 c301 x308.5 l315.7 o323.5 a330.8 b338 k345.5', true);
    ring(275, 413, 0, 'b44 p81 o109 l132 g148 q155 k198 a236 w261 v279 c294 u307 w317.5 o324 k331 u337 p344 b352.5 o360');
    ring(138, 275, 0, 'm154 n308 y319 h333 m342 b351 l360');
    add(g, 'circle', { r: 138, fill: '#3681bb' });
    add(g, 'text', { x: -70, y: 10, 'font-size': 32, fill: '#1c3f5c', 'class': 'sans', transform: 'rotate(-90)' }, 'Cup');
  })();

  // ---- Dendrogram ----
  (function () {
    var s = document.getElementById('dendrogram');
    function curve(x0, y0, x1, y1) { var m = (x0 + x1) / 2; add(s, 'path', { d: 'M' + x0 + ' ' + y0 + 'C' + m + ' ' + y0 + ' ' + m + ' ' + y1 + ' ' + x1 + ' ' + y1, fill: 'none', stroke: '#e0e0e0', 'stroke-width': 3 }); }
    function node(x, y) { add(s, 'ellipse', { cx: x, cy: y, rx: 9, ry: 7, fill: '#fff', stroke: '#9ab9d0', 'stroke-width': 3 }); }
    var mid = [['Group A', 625, 127], ['Group B', 625, 305], ['First Quarter-final', 543, 418], ['Second Quarter-final', 511, 470], ['Third Quarter-final', 537, 520], ['Fourth Quarter-final', 525, 572], ['First Semi-final', 567, 622], ['Second Semi-final', 535, 674], ['FINAL', 643, 723]];
    var A = [['New Zealand', 64, 1446], ['Australia', 90, 1404], ['Bangladesh', 115, 1436], ['Sri Lanka', 140, 1412], ['England', 166, 1402], ['Afghanistan', 191, 1436]];
    var B = [['South Africa', 241, 1438], ['India', 267, 1368], ['Ireland', 292, 1386], ['Zimbabwe', 318, 1418], ['Pakistan', 343, 1404], ['West Indies', 370, 1432]];
    var D = [['Pakistan', 418, 1404], ['Australia', 470, 1404], ['India', 520, 1368], ['West Indies', 572, 1432], ['Australia', 622, 1404], ['New Zealand', 674, 1446], ['Australia', 723, 1404]];
    mid.forEach(function (m) { curve(136, 492, 709, m[2]); });
    A.forEach(function (l) { curve(727, 127, 1299, l[1]); });
    B.forEach(function (l) { curve(727, 305, 1299, l[1]); });
    D.forEach(function (l) { line(s, 727, l[1], 1299, l[1], '#e3e7ea', 3); });
    mid.forEach(function (m) { rect(s, m[1], m[2] - 8, 702 - m[1], 16, '#fff', .8); label(s, m[0], m[1], 699, m[2] + 6, 17, '#777', 'sans'); node(718, m[2]); });
    A.concat(B, D).forEach(function (l) { label(s, l[0], 1324, l[2], l[1] + 6, 17, '#777', 'sans'); node(1307, l[1]); });
    label(s, 'Game', 53, 110, 498, 17, '#777', 'sans'); node(127, 492);
  })();

  // ---- Pie ----
  (function () {
    var s = document.getElementById('pie'), a = 0;
    function P(d) { var t = (d - 90) * Math.PI / 180; return (747 + 509 * Math.cos(t)).toFixed(1) + ' ' + (396 + 301 * Math.sin(t)).toFixed(1); }
    [['#2678b2', 29.4], ['#aec7e6', 60], ['#fd7f28', 134.9], ['#fcba7d', 255.2], ['#319f32', 299.8], ['#9ade8c', 360]].forEach(function (e) {
      add(s, 'path', { d: 'M747 396L' + P(a) + 'A509 301 0 0 1 ' + P(e[1]) + 'Z', fill: e[0], stroke: '#fff', 'stroke-width': 3, 'stroke-opacity': .6 });
      a = e[1];
    });
    ['M880 104Q886 66 906 58', 'M1108 184Q1130 156 1166 148', 'M1258 438H1334', 'M612 690Q602 716 588 732', 'M236 356Q200 358 190 352L158 350', 'M486 130Q462 110 448 94'].forEach(function (d) { add(s, 'path', { d: d, fill: 'none', stroke: '#ccc', 'stroke-width': 2 }); });
    [['Gujarat', 919, 1001, 62], ['Maharashtra', 1180, 1306, 152], ['Delhi', 1348, 1406, 443], ['Tamilnadu', 460, 575, 734], ['Punjab', 64, 146, 353], ['Rajasthan', 320, 437, 97]].forEach(function (e) { label(s, e[0], e[1], e[2], e[3], 19, '#666', 'sans'); });
    [['8%', 801, 838, 240], ['8%', 928, 964, 284], ['21%', 1002, 1051, 425], ['33%', 647, 696, 564], ['13%', 443, 492, 380], ['17%', 582, 629, 258]].forEach(function (e) { label(s, e[0], e[1], e[2], e[3], 18, '#dedede', 'sans'); });
  })();
})();
```
